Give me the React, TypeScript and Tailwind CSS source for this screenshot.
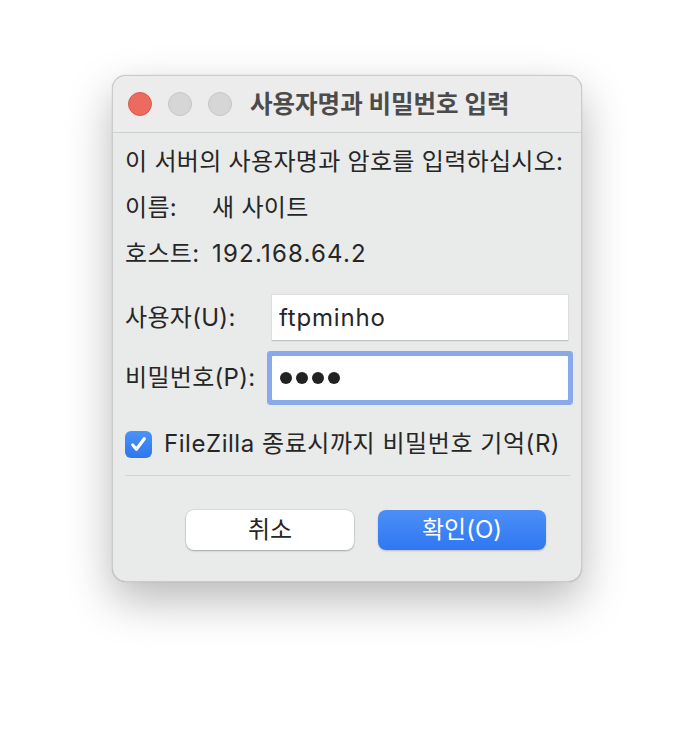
import { useState } from 'react';

const font = { fontFamily: 'Inter, "Noto Sans CJK KR", sans-serif' };

function TrafficLights() {
  return (
    <div className="flex items-center gap-[16px]">
      <span className="h-[24px] w-[24px] rounded-full bg-[#ec6a5e] border border-[#d85a4f]" />
      <span className="h-[24px] w-[24px] rounded-full bg-[#d6d6d6] border border-[#c6c6c6]" />
      <span className="h-[24px] w-[24px] rounded-full bg-[#d6d6d6] border border-[#c6c6c6]" />
    </div>
  );
}

export default function App() {
  const [user, setUser] = useState('ftpminho');
  const [remember, setRemember] = useState(true);

  return (
    <div className="w-[694px] h-[730px] bg-white pt-[75px] pl-[112px]" style={font}>
      <div className="w-[470px] h-[507px] rounded-[14px] bg-[#e9eaea] border border-[#cbcbcb] shadow-[0_18px_45px_rgba(0,0,0,0.28),0_0_1px_rgba(0,0,0,0.3)] overflow-hidden flex flex-col">
        <div className="h-[57px] shrink-0 flex items-center pl-[15px] gap-[18px] bg-[#ececec] border-b border-[#d0d0d0]">
          <TrafficLights />
          <span className="text-[24.5px] font-bold text-[#4b4b4b]">사용자명과 비밀번호 입력</span>
        </div>

        <div className="flex flex-col pl-[12px] pr-[12px] pt-[6px] text-[24px] tracking-[0.3px] text-[#262626]">
          <div className="h-[46px] flex items-center">이 서버의 사용자명과 암호를 입력하십시오:</div>
          <div className="h-[46px] flex items-center">
            <span className="w-[87px]">이름:</span>
            <span>새 사이트</span>
          </div>
          <div className="h-[46px] flex items-center">
            <span className="w-[87px]">호스트:</span>
            <span className="tracking-[1.2px]">192.168.64.2</span>
          </div>

          <div className="mt-[18px] h-[46px] flex items-center">
            <span className="w-[147px]">사용자(U):</span>
            <input
              value={user}
              onChange={(e) => setUser(e.target.value)}
              className="w-[296px] h-[46px] bg-white pl-[7px] outline-none text-[24px] tracking-[0.8px] text-[#262626] border-b border-[#c4c4c4] shadow-[0_0_0_1px_#dedede]"
            />
          </div>
          <div className="mt-[15px] h-[44px] flex items-center">
            <span className="w-[147px]">비밀번호(P):</span>
            <div className="w-[296px] h-[44px] bg-white pl-[8px] flex items-center gap-[4px] rounded-[1px] ring-[5px] ring-[#8aa9ea]">
              <span className="h-[12px] w-[12px] rounded-full bg-[#222]" />
              <span className="h-[12px] w-[12px] rounded-full bg-[#222]" />
              <span className="h-[12px] w-[12px] rounded-full bg-[#222]" />
              <span className="h-[12px] w-[12px] rounded-full bg-[#222]" />
            </div>
          </div>

          <label className="mt-[29px] h-[30px] flex items-center gap-[12px] cursor-pointer">
            <button
              onClick={() => setRemember(!remember)}
              className={`h-[27px] w-[27px] rounded-[6px] flex items-center justify-center ${remember ? 'bg-gradient-to-b from-[#4b93f7] to-[#2f76ec]' : 'bg-white border border-[#bbb]'}`}
            >
              {remember && (
                <svg width="19" height="19" viewBox="0 0 18 18" fill="none">
                  <path d="M3.5 9.5l3.5 4 7.5-10" stroke="white" strokeWidth="3" strokeLinecap="round" strokeLinejoin="round" />
                </svg>
              )}
            </button>
            <span className="tracking-[0.55px]">FileZilla 종료시까지 비밀번호 기억(R)</span>
          </label>

          <div className="mt-[16px] h-px bg-[#d4d4d4] w-[445px]" />

          <div className="mt-[34px] flex gap-[24px] pl-[61px] tracking-normal">
            <button className="w-[168px] h-[40px] rounded-[8px] bg-white text-[#262626] text-[24px] shadow-[0_1px_2px_rgba(0,0,0,0.25),0_0_0_0.5px_rgba(0,0,0,0.12)]">
              취소
            </button>
            <button className="w-[168px] h-[40px] rounded-[8px] bg-gradient-to-b from-[#4d8ff6] to-[#2f77f3] text-white text-[24px] shadow-[0_1px_2px_rgba(0,0,0,0.2)]">
              확인(O)
            </button>
          </div>
        </div>
      </div>
    </div>
  );
}
